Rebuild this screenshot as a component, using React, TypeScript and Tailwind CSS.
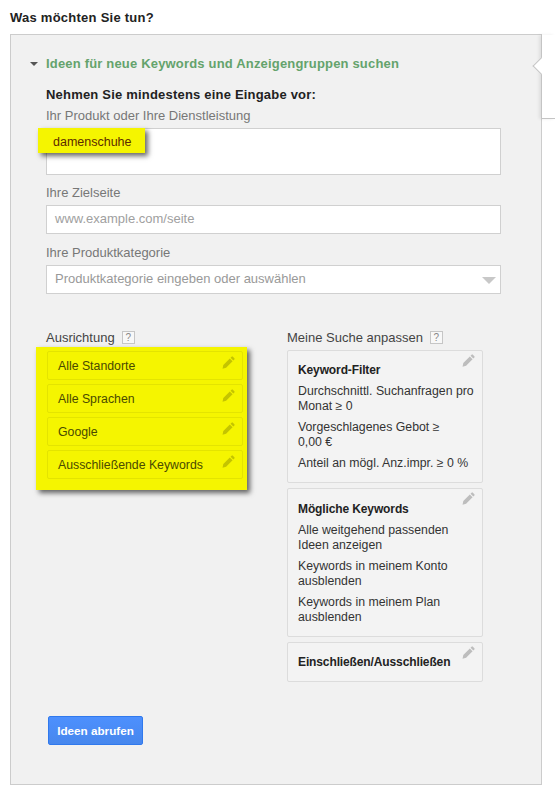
const font = { fontFamily: '"Liberation Sans", Arial, sans-serif' };

function IconPencil({ className }: { className: string }) {
  return (
    <svg className={className} viewBox="0 0 14 14" fill="currentColor" aria-hidden>
      <path d="M9.2 1.8l1.1-1.1a1 1 0 0 1 1.4 0l1.6 1.6a1 1 0 0 1 0 1.4l-1.1 1.1zM8.4 2.6l3 3-7 7-3.8 1 .8-4z" />
    </svg>
  );
}

function HelpBox() {
  return (
    <span className="flex h-[13px] w-[13px] items-center justify-center border border-[#c6c6c6] bg-[#f8f8f8] text-[10px] leading-none text-[#888]">
      ?
    </span>
  );
}

function TargetRow({ label }: { label: string }) {
  return (
    <div className="relative flex h-[29px] items-center rounded-[2px] border border-[#e4e400] pl-[10px] pt-[2px] text-[12.3px] text-[#4a4a00]">
      {label}
      <IconPencil className="absolute right-[7px] top-[4px] h-[13px] w-[13px] text-[#c4c400]" />
    </div>
  );
}

function FilterCard({ title, lines, className }: { title: string; lines: string[]; className: string }) {
  return (
    <div className={`relative rounded-[2px] border border-[#dcdcdc] bg-[#f3f3f3] pl-[10px] pr-[8px] text-[12.3px] leading-[15px] text-[#333] ${className}`}>
      <div className="text-[12px] font-bold tracking-[-0.12px] text-[#222]">{title}</div>
      {lines.map((line) => (
        <p key={line} className="mt-[6px] whitespace-pre-line">
          {line}
        </p>
      ))}
      <IconPencil className="absolute right-[7px] top-[3px] h-[13px] w-[13px] text-[#bdbdbd]" />
    </div>
  );
}

export default function App() {
  return (
    <div className="h-[798px] w-[555px] overflow-hidden bg-white" style={font}>
      <h1 className="pl-[10px] pt-[10px] text-[13px] font-bold leading-[15px] tracking-[0.25px] text-[#222]">Was möchten Sie tun?</h1>

      <div className="relative ml-[10px] mt-[9px] h-[751px] w-[532px] border border-[#cccccc] bg-[#f1f1f1] pl-[35px] pr-[40px]">
        {/* side tab hanging off the right edge */}
        <div className="absolute right-[-14px] top-0 h-[84px] w-[14px] border-b border-l border-[#c4c4c4] bg-white shadow-[-2px_0_3px_rgba(0,0,0,0.08)]">
          <div className="absolute left-[-7px] top-[25px] h-[12px] w-[12px] rotate-45 border-b border-l border-[#c4c4c4] bg-white" />
        </div>

        <div className="relative mt-[21px] flex h-[16px] items-center text-[13px] font-bold tracking-[0.18px] text-[#64a36c]">
          <span className="absolute left-[-16px] top-[6px] h-0 w-0 border-x-[4px] border-t-[4px] border-x-transparent border-t-[#555]" />
          Ideen für neue Keywords und Anzeigengruppen suchen
        </div>

        <div className="mt-[15px] text-[13px] font-bold leading-[16px] tracking-[0.2px] text-[#222]">Nehmen Sie mindestens eine Eingabe vor:</div>
        <label className="mt-[5px] block text-[13px] leading-[15px] text-[#777]">Ihr Produkt oder Ihre Dienstleistung</label>

        <div className="relative mt-[5px] h-[47px] border border-[#d0d0d0] bg-white">
          <span className="absolute left-[-9px] top-[-1px] flex h-[25px] w-[107px] items-center bg-[#f5f500] pl-[15px] pt-[3px] text-[12.5px] text-[#5c2a00] shadow-[3px_3px_5px_rgba(0,0,0,0.6)]">
            damenschuhe
          </span>
        </div>

        <label className="mt-[10px] block text-[13px] leading-[15px] text-[#777]">Ihre Zielseite</label>
        <div className="mt-[5px] flex h-[29px] items-center border border-[#d0d0d0] bg-white pb-[1px] pl-[8px] text-[13px] text-[#a0a0a0]">www.example.com/seite</div>

        <label className="mt-[11px] block text-[13px] leading-[15px] text-[#777]">Ihre Produktkategorie</label>
        <div className="relative mt-[5px] flex h-[29px] items-center border border-[#d0d0d0] bg-white pb-[1px] pl-[8px] text-[13px] text-[#999]">
          Produktkategorie eingeben oder auswählen
          <span className="absolute right-[4px] top-[11px] h-0 w-0 border-x-[7px] border-t-[7px] border-x-transparent border-t-[#c8c8c8]" />
        </div>

        <div className="mt-[36px] flex">
          <div className="w-[241px]">
            <div className="flex h-[15px] items-center gap-[7px] text-[13px] text-[#444]">
              Ausrichtung <HelpBox />
            </div>
            <div className="ml-[-10px] mt-[2px] flex h-[143px] w-[211px] flex-col gap-[4px] bg-[#f5f500] pl-[11px] pr-[4px] pt-[4px] shadow-[3px_3px_5px_rgba(0,0,0,0.6)]">
              <TargetRow label="Alle Standorte" />
              <TargetRow label="Alle Sprachen" />
              <TargetRow label="Google" />
              <TargetRow label="Ausschließende Keywords" />
            </div>
          </div>

          <div className="w-[196px]">
            <div className="flex h-[15px] items-center gap-[7px] text-[13px] text-[#444]">
              Meine Suche anpassen <HelpBox />
            </div>
            <div className="mt-[5px] flex flex-col gap-[5px]">
              <FilterCard
                title="Keyword-Filter"
                className="h-[133px] pt-[12px]"
                lines={["Durchschnittl. Suchanfragen pro Monat ≥ 0", "Vorgeschlagenes Gebot ≥\n0,00 €", "Anteil an mögl. Anz.impr. ≥ 0 %"]}
              />
              <FilterCard
                title="Mögliche Keywords"
                className="h-[149px] pt-[13px]"
                lines={["Alle weitgehend passenden Ideen anzeigen", "Keywords in meinem Konto ausblenden", "Keywords in meinem Plan ausblenden"]}
              />
              <FilterCard title="Einschließen/Ausschließen" className="h-[40px] pt-[12px]" lines={[]} />
            </div>
          </div>
        </div>

        <button className="ml-[2px] mt-[34px] block h-[29px] w-[95px] rounded-[2px] border border-[#3079ed] bg-gradient-to-b from-[#4d90fe] to-[#4787ed] text-[11.7px] font-bold text-white">
          Ideen abrufen
        </button>
      </div>
    </div>
  );
}
